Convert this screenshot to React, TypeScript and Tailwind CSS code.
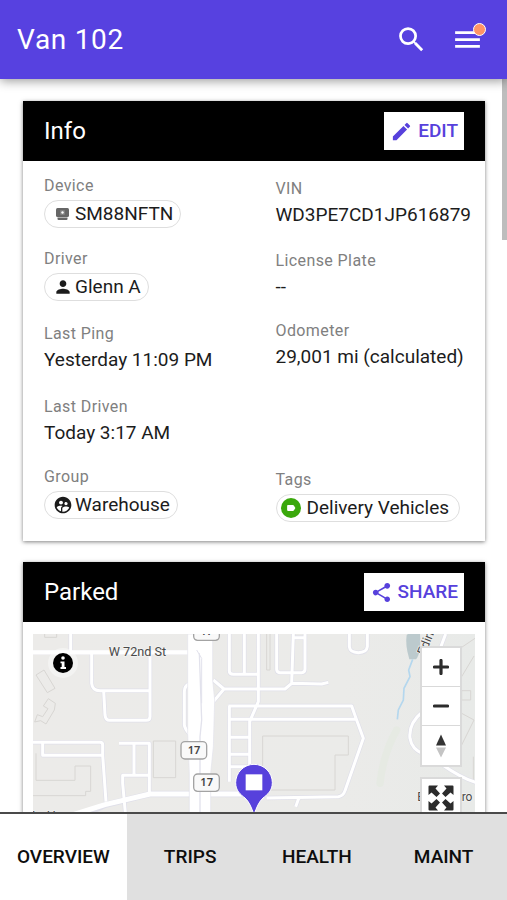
import type { ReactNode } from "react";
import {
  MdCreate,
  MdMenu,
  MdPerson,
  MdSearch,
  MdShare,
  MdSupervisedUserCircle,
} from "react-icons/md";

function DeviceIcon() {
  return (
    <svg viewBox="0 0 20 20" className="size-5 shrink-0" aria-hidden="true">
      <rect x="3" y="4" width="13" height="9" rx="1.5" fill="#666" />
      <path d="M4.500 13.500h10v1.500q0 1-1 1h-8q-1 0-1-1z" fill="#666" />
      <rect x="7" y="6" width="5" height="5" rx="1" fill="#808080" />
      <circle cx="9.500" cy="8.500" r="1.200" fill="#fff" />
    </svg>
  );
}

function TagIcon() {
  return (
    <svg viewBox="0 0 20 20" className="size-5 shrink-0" aria-hidden="true">
      <circle cx="10" cy="10" r="10" fill="#3aa80b" />
      <path
        d="M6.900 7.100h4.900q.8 0 1.200.6L14.400 10l-1.400 2.300q-.4.6-1.200.6H6.900q-.8 0-.8-.8V7.900q0-.8.8-.8z"
        fill="#fff"
      />
    </svg>
  );
}

function Field({ label, children }: { label: string; children: ReactNode }) {
  return (
    <div>
      <dt className="mb-[3px] text-base leading-[22px] tracking-wide text-[#808080]">{label}</dt>
      <dd className="whitespace-nowrap text-[19px] leading-6 text-[#1c1c1c]">{children}</dd>
    </div>
  );
}

function Chip({ children, tight = false }: { children: ReactNode; tight?: boolean }) {
  return (
    <a
      href="#"
      className={
        tight
          ? "flex h-7 w-fit items-center gap-[6px] rounded-full border border-[#dedede] pl-1 pr-[10px]"
          : "flex h-7 w-fit items-center gap-[2px] rounded-full border border-[#dedede] pl-2 pr-[7px]"
      }
    >
      {children}
    </a>
  );
}

function Card({ title, action, children }: { title: string; action: ReactNode; children: ReactNode }) {
  return (
    <section className="bg-white shadow-[0_1px_4px_rgba(0,0,0,0.5)]">
      <header className="flex h-[60px] items-center justify-between bg-black px-[21px]">
        <h2 className="text-2xl text-white">{title}</h2>
        {action}
      </header>
      {children}
    </section>
  );
}

function ActionButton({ icon, children }: { icon: ReactNode; children: ReactNode }) {
  return (
    <button
      type="button"
      className="flex h-[38px] items-center gap-[5px] bg-white px-[6px] text-[19px] font-medium text-[#5741dc]"
    >
      {icon}
      {children}
    </button>
  );
}

const roads = [
  "M39 97H505", "M152 42V97",
  "M215 97V190Q217 212 240 212H390", "M390 97V290Q390 301 378 301H268Q257 301 255 285L251 212",
  "M507 192Q493 198 493 215V315Q494 325 508 342",
  "M580 180L612 207L580 245", "M612 207H795L815 190L905 192L925 187",
  "M628 42V153Q628 163 640 163H715", "M673 42V163", "M715 42V245L689 305V440",
  "M770 42V148Q770 158 780 158H845Q855 158 855 148V42", "M820 42L815 190", "M820 53H855",
  "M988 42V80Q990 98 1015 98Q1040 98 1042 80V42",
  "M625 258H995L1008 295L1030 355L975 512Q970 528 955 530L740 534",
  "M625 298H1008", "M628 258V485", "M628 352H689", "M628 403H689", "M628 440H689",
  "M297 370H388V522", "M342 370V465", "M388 466H308V490L318 600",
  "M39 367H240Q248 367 248 375V406H68V367", "M248 406L258 545",
  "M1207 276Q1165 310 1170 355Q1175 388 1210 402", "M1268 435Q1325 475 1370 488",
  "M1277 42L1262 82", "M838 530L827 560",
];

const buildings = [
  "M48 165L72 150L105 205L82 218Z",
  "M70 258L85 236L106 250L103 270L78 312L62 302L44 306L52 284L68 290L84 266Z",
  "M74 42V52H110V42",
  "M48 400V481H165V438H212V514H197V527H39",
  "M400 363H467V473H400Z",
  "M728 348H985V405H945V510H728Z",
  "M740 42V150H750V42",
  "M1325 212H1352V240H1325Z",
  "M1325 82L1365 55", "M1325 170L1362 108", "M1325 280L1362 300L1325 375", "M1360 410V490",
];

function RouteShield({ x, y }: { x: number; y: number }) {
  return (
    <g>
      <rect x={x} y={y} width="77" height="52" rx="12" fill="#f9f9f9" stroke="#a3a3a3" strokeWidth="4" />
      <text x={x + 39} y={y + 37} textAnchor="middle" fontSize="33" fontWeight="600" fill="#454545">
        17
      </text>
    </g>
  );
}

function StreetMap() {
  return (
    <svg
      viewBox="39 42 1326 900"
      preserveAspectRatio="xMidYMin slice"
      className="size-full font-['Noto_Sans',sans-serif]"
      role="img"
      aria-label="Map of the parked location"
    >
      <defs>
        <linearGradient id="ground" x1="0" x2="1">
          <stop offset="0" stopColor="#ecebe9" />
          <stop offset="0.7" stopColor="#ebebe9" />
          <stop offset="1" stopColor="#e8eae8" />
        </linearGradient>
      </defs>
      <rect x="39" y="42" width="1326" height="900" fill="url(#ground)" />
      <path d="M1130 330Q1090 400 1080 490" fill="none" stroke="#e6eae3" strokeWidth="22" strokeLinecap="round" />
      <path d="M1160 45Q1155 75 1168 118H1188Q1204 100 1200 42H1164Z" fill="#bccacd" />
      <path
        d="M1178 118L1166 150L1170 170L1152 205L1150 240L1135 270L1132 298"
        fill="none"
        stroke="#b4d7ee"
        strokeWidth="5"
      />
      <path d={buildings.join("")} fill="none" stroke="#d8d6d3" strokeWidth="3" />
      <g fill="none" strokeLinejoin="round">
        <path d={roads.join("")} stroke="#dfdfe9" strokeWidth="13" />
        <path d="M180 590L255 555L390 522H740" stroke="#dfdfe9" strokeWidth="19" />
        <path d={roads.join("")} stroke="#fff" strokeWidth="9" />
        <path d="M39 97H505" stroke="#fff" strokeWidth="13" />
        <path d="M140 590L255 554L390 522H740" stroke="#fff" strokeWidth="15" />
      </g>
      <path
        d="M503 42H578V180L584 240L580 380L572 460V942H508V460L503 340Z"
        fill="#fff"
        stroke="#e3e3ec"
        strokeWidth="2"
      />
      <path d="M538 100L545 300L540 350V942" fill="none" stroke="#e2e2ec" strokeWidth="4" />
      <path d="M530 90L545 115V250" fill="none" stroke="#e2e2ec" strokeWidth="3" />
      <g fill="#4a4a4a" stroke="#f4f4f3" strokeWidth="4" paintOrder="stroke" className="font-[Roboto,sans-serif]">
        <text x="266" y="109" fontSize="38">W 72nd St</text>
        <text x="0" y="0" fontSize="38" transform="translate(1215 108) rotate(-68)">Edina</text>
        <text x="1192" y="542" fontSize="36">E</text>
        <text x="1325" y="542" fontSize="36">ro</text>
        <text x="36" y="600" fontSize="38">L</text>
        <text x="80" y="600" fontSize="38">H</text>
      </g>
      <RouteShield x={521} y={9} />
      <RouteShield x={483} y={365} />
      <RouteShield x={521} y={462} />
      <path
        d="M702 433A55 55 0 0 1 757 488C757 512 743 523 729 534C716 546 710 562 702 584C694 562 688 546 675 534C661 523 647 512 647 488A55 55 0 0 1 702 433Z"
        fill="#5741dc"
        stroke="#fff"
        strokeWidth="3"
      />
      <rect x="677" y="463" width="50" height="48" fill="#fff" />
    </svg>
  );
}

function MapControls() {
  return (
    <div className="absolute right-[13px] top-3 flex w-[42px] flex-col gap-[10px]">
      <div className="flex flex-col divide-y divide-[#d9d9d9] border-2 border-[#dadada] bg-white">
        <button type="button" aria-label="Zoom in" className="grid h-[39px] place-items-center">
          <svg viewBox="0 0 16 16" className="size-4">
            <path d="M8 1.500V14.500M1.500 8H14.500" stroke="#2c2c2c" strokeWidth="3.200" strokeLinecap="round" />
          </svg>
        </button>
        <button type="button" aria-label="Zoom out" className="grid h-[39px] place-items-center">
          <svg viewBox="0 0 16 16" className="size-4">
            <path d="M1.500 8H14.500" stroke="#2c2c2c" strokeWidth="3.200" strokeLinecap="round" />
          </svg>
        </button>
        <button type="button" aria-label="Reset bearing" className="grid h-[39px] place-items-center">
          <svg viewBox="0 0 12 24" className="h-6 w-3">
            <path d="M6 0.500L11 11.500H1Z" fill="#333" />
            <path d="M6 23.500L11 13.500H1Z" fill="#c4c4c4" />
          </svg>
        </button>
      </div>
      <button
        type="button"
        aria-label="Full screen"
        className="grid h-[42px] place-items-center border-2 border-[#dadada] bg-white"
      >
        <svg viewBox="0 0 26 26" className="size-[26px]" fill="#2c2c2c">
          <path id="arrow" d="M0.500 1.500Q0.500 0.500 1.500 0.500H10L7.500 3.500L12 8.500L8.500 12L3.500 7.500L0.500 10Z" />
          <use href="#arrow" transform="rotate(90 13 13)" />
          <use href="#arrow" transform="rotate(180 13 13)" />
          <use href="#arrow" transform="rotate(270 13 13)" />
        </svg>
      </button>
    </div>
  );
}

const tabs = ["OVERVIEW", "TRIPS", "HEALTH", "MAINT"];

export default function App() {
  return (
    <div className="flex h-screen flex-col bg-white font-[Roboto,sans-serif]">
      <header className="relative z-10 flex h-[79px] shrink-0 items-center justify-between bg-[#5741e0] pl-[17px] pr-[23px] text-white shadow-[0_2px_10px_rgba(0,0,0,0.4)]">
        <h1 className="text-[28px] tracking-wide">Van 102</h1>
        <div className="flex items-center gap-[23px]">
          <button type="button" aria-label="Search">
            <MdSearch className="size-[33px]" />
          </button>
          <button type="button" aria-label="Menu, new notifications" className="relative">
            <MdMenu className="size-[33px]" />
            <span className="absolute -right-0.5 top-0 size-[13px] rounded-full border border-white bg-[#ff9466]" />
          </button>
        </div>
      </header>

      <div className="relative min-h-0 flex-1">
        <main className="flex h-full flex-col gap-[21px] overflow-y-auto pb-6 pl-[23px] pr-[22px] pt-[22px] [scrollbar-width:none]">
          <Card title="Info" action={<ActionButton icon={<MdCreate className="size-[23px]" />}>EDIT</ActionButton>}>
            <div className="grid grid-cols-2 gap-x-[33px] pb-[21px] pl-[21px] pr-[11px] pt-[14px]">
              <dl className="grid grid-rows-[73px_75px_73px_70px_54px]">
                <Field label="Device">
                  <Chip>
                    <DeviceIcon />
                    SM88NFTN
                  </Chip>
                </Field>
                <Field label="Driver">
                  <Chip>
                    <MdPerson className="size-5" />
                    Glenn A
                  </Chip>
                </Field>
                <Field label="Last Ping">Yesterday 11:09 PM</Field>
                <Field label="Last Driven">Today 3:17 AM</Field>
                <Field label="Group">
                  <Chip>
                    <MdSupervisedUserCircle className="size-5" />
                    Warehouse
                  </Chip>
                </Field>
              </dl>
              <dl className="grid grid-rows-[72px_70px_149px_51px] pt-[3px]">
                <Field label="VIN">WD3PE7CD1JP616879</Field>
                <Field label="License Plate">--</Field>
                <Field label="Odometer">29,001 mi (calculated)</Field>
                <Field label="Tags">
                  <Chip tight>
                    <TagIcon />
                    Delivery Vehicles
                  </Chip>
                </Field>
              </dl>
            </div>
          </Card>

          <Card title="Parked" action={<ActionButton icon={<MdShare className="size-[23px]" />}>SHARE</ActionButton>}>
            <div className="px-[10px] pb-[10px] pt-3">
              <div className="relative h-[300px]">
                <StreetMap />
                <button
                  type="button"
                  aria-label="Map information"
                  className="absolute left-[15px] top-[14px] rounded-full bg-white/40 p-[5px]"
                >
                  <svg viewBox="0 0 20 20" className="size-5">
                    <circle cx="10" cy="10" r="10" />
                    <circle cx="10" cy="5" r="1.800" fill="#fff" />
                    <path d="M7.500 8.500H11.500V14H13V16H7.500V14H8.700V10.300H7.500Z" fill="#fff" />
                  </svg>
                </button>
                <MapControls />
              </div>
            </div>
          </Card>
        </main>
        <div className="absolute right-0 top-0 h-[161px] w-[5px] bg-[#bdbdbd]" />
      </div>

      <nav className="grid h-[88px] shrink-0 grid-cols-4 border-t-2 border-[#4a4a4a] bg-[#e0e0e0]">
        {tabs.map((tab, i) => (
          <a
            key={tab}
            href="#"
            aria-current={i === 0 ? "page" : undefined}
            className="flex items-center justify-center text-[19px] font-medium text-[#0d0d0d] aria-[current=page]:bg-white"
          >
            {tab}
          </a>
        ))}
      </nav>
    </div>
  );
}
